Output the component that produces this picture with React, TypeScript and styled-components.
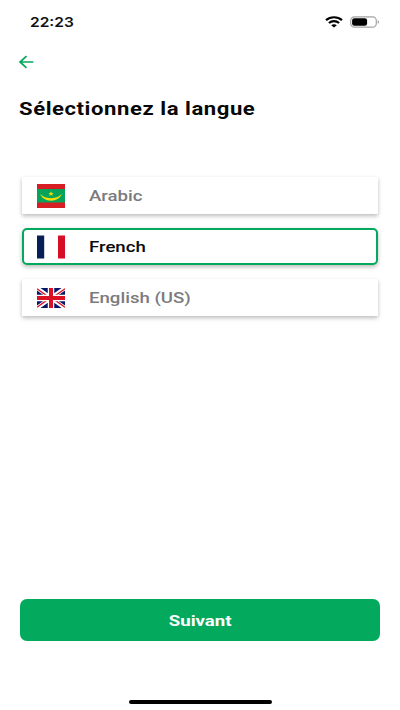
import React, { useState } from "react";
import styled, { createGlobalStyle } from "styled-components";

const GREEN = "#03a95c";

const GlobalStyle = createGlobalStyle`
  *, *::before, *::after { box-sizing: border-box; }
  body { margin: 0; background: #fff; font-family: Roboto, "Liberation Sans", sans-serif; }
`;

const Screen = styled.main`
  display: flex;
  flex-direction: column;
  width: 400px;
  height: 710px;
  overflow: hidden;
  background: #fff;
`;

const StatusBar = styled.header`
  display: flex;
  align-items: center;
  justify-content: space-between;
  height: 44px;
  padding: 0 20px 0 30px;
`;

const WideText = styled.span<{ $stretch: number; $origin?: string }>`
  display: inline-block;
  white-space: nowrap;
  transform: scaleX(${(p) => p.$stretch});
  transform-origin: ${(p) => p.$origin ?? "left"} center;
`;

const OptionLabel = styled(WideText)`
  padding-top: 1px;
`;

const Clock = styled.time`
  font: 600 13.5px/18px Inter, sans-serif;
  color: #111;
`;

const StatusIcons = styled.div`
  display: flex;
  align-items: center;
  gap: 7px;
`;

const BackButton = styled.button`
  display: flex;
  width: 16px;
  height: 14px;
  margin: 11px 0 0 18px;
  padding: 0;
  border: 0;
  background: none;
`;

const Title = styled.h1`
  margin: 28px 0 0 19px;
  font-size: 18.4px;
  line-height: 24px;
  font-weight: 700;
  letter-spacing: 0.47px;
  color: #080808;
`;

const LanguageList = styled.div`
  display: flex;
  flex-direction: column;
  gap: 14px;
  margin: 56px 22px 0;
`;

const LanguageOption = styled.button<{ $selected: boolean }>`
  display: flex;
  align-items: center;
  gap: 24px;
  height: 37px;
  padding: 0 ${(p) => (p.$selected ? 13 : 15)}px;
  border: ${(p) => (p.$selected ? `2px solid ${GREEN}` : "0")};
  border-radius: ${(p) => (p.$selected ? 5 : 1)}px;
  background: #fff;
  box-shadow: 0 2px 4px rgba(0, 0, 0, 0.27);
  font: 500 15.5px/20px Roboto, sans-serif;
  color: ${(p) => (p.$selected ? "#0a0a0a" : "#7b7b7e")};
`;

const FlagSlot = styled.span`
  display: flex;
  align-items: center;
  width: 28px;
  height: 24px;
  margin-right: -0.4px;
`;

const NextButton = styled.button`
  height: 42px;
  margin: auto 20px 59px;
  padding: 1px 0 0;
  border: 0;
  border-radius: 7px;
  background: ${GREEN};
  color: #fff;
  font: 700 15.5px/20px Roboto, sans-serif;
`;

const HomeIndicator = styled.div`
  flex: none;
  align-self: center;
  width: 143px;
  height: 4px;
  margin-bottom: 6px;
  border-radius: 2px;
  background: #000;
`;

const WifiIcon = () => (
  <svg width="18" height="12" viewBox="0 0 18 12" fill="none" stroke="#000">
    <path d="M1 4.1C5.4.3 12.6.3 17 4.1" strokeWidth="2.2" />
    <path d="M3.9 7C6.8 4.5 11.2 4.5 14.1 7" strokeWidth="2.1" />
    <path d="M6.2 9.2C7.7 7.8 10.3 7.8 11.8 9.2L9 11.6Z" fill="#000" stroke="none" />
  </svg>
);

const BatteryIcon = () => (
  <svg width="30" height="12" viewBox="0 0 30 12">
    <rect x="0.7" y="0.8" width="25.6" height="10.4" rx="3.7" fill="#fff" stroke="#a4a4a4" strokeWidth="1.2" />
    <rect x="2.1" y="2.2" width="15" height="7.6" rx="2.3" />
    <path d="M27.7 4.2c2 .7 2 2.9 0 3.6z" fill="#a4a4a4" />
  </svg>
);

const BackIcon = () => (
  <svg width="16" height="14" viewBox="0 0 16 14" fill="none" stroke={GREEN} strokeWidth="1.7">
    <path d="M15.4 7H2M8.5 1.1 2 7l6.5 5.9" />
  </svg>
);

const MauritaniaFlag = () => (
  <svg width="28" height="24" viewBox="0 0 28 24">
    <path fill="#d81e25" d="M0 0h28v24H0z" />
    <path fill="#08a35a" d="M0 5h28v13.5H0z" />
    <path fill="#f4df0b" d="M3.5 9.5c2.6 6.2 18.4 6.2 21 0C23.5 19 4.5 19 3.5 9.5z" />
    <path fill="#f4df0b" d="m14 7.2.8 1.7h1.9l-1.5 1.2.6 1.8-1.8-1.1-1.8 1.1.6-1.8-1.5-1.2h1.9z" />
  </svg>
);

const FranceFlag = () => (
  <svg width="28" height="24" viewBox="0 0 28 24">
    <path fill="#061f55" d="M0 .5h7.2v23H0z" />
    <path fill="#d60f27" d="M21 .5h7v23h-7z" />
  </svg>
);

const UnitedKingdomFlag = () => (
  <svg width="28" height="20" viewBox="0 0 28 20">
    <path fill="#07166b" d="M0 0h28v20H0z" />
    <path stroke="#fff" strokeWidth="4" d="m0 0 28 20M28 0 0 20" />
    <path stroke="#db1024" strokeWidth="1.3" d="m0 .8 11 7.8M17 11.4l11 7.8M28 .8l-11 7.8M11 11.4 0 19.2" />
    <path stroke="#fff" strokeWidth="6.5" d="M14 0v20M0 10h28" />
    <path stroke="#db1024" strokeWidth="4" d="M14 0v20M0 10h28" />
  </svg>
);

const languages = [
  { id: "ar", label: "Arabic", Flag: MauritaniaFlag },
  { id: "fr", label: "French", Flag: FranceFlag },
  { id: "en", label: "English (US)", Flag: UnitedKingdomFlag },
];

export default function App() {
  const [selected, setSelected] = useState("fr");

  return (
    <>
      <GlobalStyle />
      <Screen>
        <StatusBar>
          <Clock><WideText $stretch={1.15}>22:23</WideText></Clock>
          <StatusIcons><WifiIcon /><BatteryIcon /></StatusIcons>
        </StatusBar>
        <BackButton aria-label="Retour"><BackIcon /></BackButton>
        <Title><WideText $stretch={1.2}>Sélectionnez la langue</WideText></Title>
        <LanguageList>
          {languages.map(({ id, label, Flag }) => (
            <LanguageOption key={id} $selected={id === selected} onClick={() => setSelected(id)}>
              <FlagSlot><Flag /></FlagSlot>
              <OptionLabel $stretch={1.2}>{label}</OptionLabel>
            </LanguageOption>
          ))}
        </LanguageList>
        <NextButton><WideText $stretch={1.2} $origin="center">Suivant</WideText></NextButton>
        <HomeIndicator />
      </Screen>
    </>
  );
}
